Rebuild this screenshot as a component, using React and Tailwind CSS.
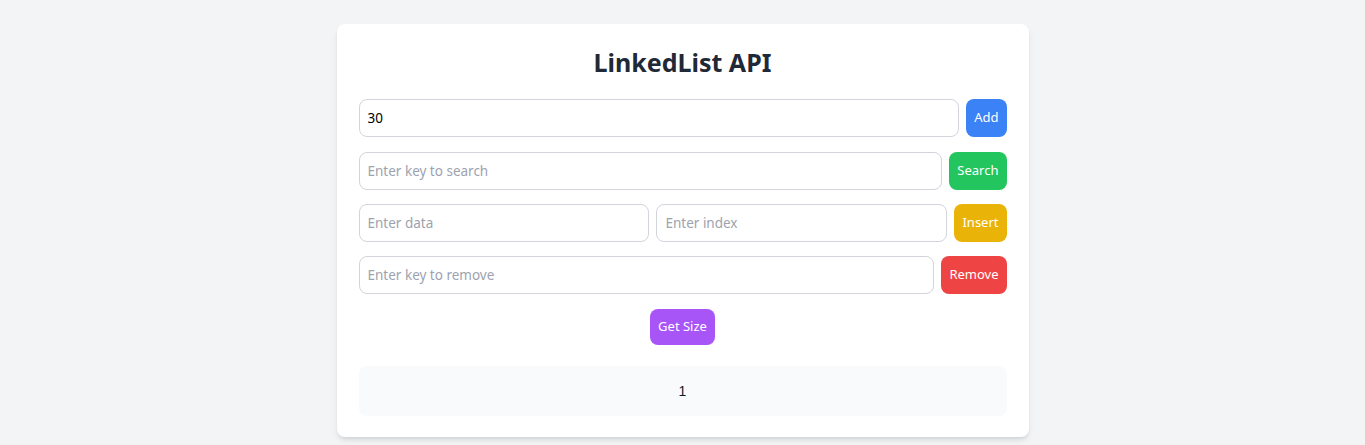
import React, { useState } from 'react';

const inputCls =
  'flex-1 min-w-0 h-[38px] px-2 border border-[#d1d5db] rounded-lg text-[13.5px] text-black placeholder-[#9ca3af] focus:outline-none';
const btnCls = 'h-[38px] px-2 rounded-lg text-[13px] text-white';

function App() {
  const [value, setValue] = useState('30');
  const [searchKey, setSearchKey] = useState('');
  const [data, setData] = useState('');
  const [index, setIndex] = useState('');
  const [removeKey, setRemoveKey] = useState('');
  const [result] = useState('1');

  return (
    <div className="min-h-screen bg-[#f3f4f6] pt-6 font-['Noto_Sans',sans-serif]">
      <div className="mx-auto w-[692px] bg-white rounded-lg shadow-md px-[22px] pt-[22px] pb-[21px]">
        <h1 className="text-center text-[25px] leading-8 font-bold text-[#1f2937] mb-[21px]">
          LinkedList API
        </h1>

        <div className="flex gap-[7px] mb-[15px]">
          <input className={inputCls} value={value} onChange={(e) => setValue(e.target.value)} />
          <button className={`${btnCls} bg-[#3b82f6]`}>Add</button>
        </div>

        <div className="flex gap-[7px] mb-[14px]">
          <input
            className={inputCls}
            placeholder="Enter key to search"
            value={searchKey}
            onChange={(e) => setSearchKey(e.target.value)}
          />
          <button className={`${btnCls} bg-[#22c55e]`}>Search</button>
        </div>

        <div className="flex gap-[7px] mb-[14px]">
          <input
            className={inputCls}
            placeholder="Enter data"
            value={data}
            onChange={(e) => setData(e.target.value)}
          />
          <input
            className={inputCls}
            placeholder="Enter index"
            value={index}
            onChange={(e) => setIndex(e.target.value)}
          />
          <button className={`${btnCls} bg-[#eab308]`}>Insert</button>
        </div>

        <div className="flex gap-[7px] mb-[15px]">
          <input
            className={inputCls}
            placeholder="Enter key to remove"
            value={removeKey}
            onChange={(e) => setRemoveKey(e.target.value)}
          />
          <button className={`${btnCls} bg-[#ef4444]`}>Remove</button>
        </div>

        <div className="flex justify-center mb-[21px]">
          <button className="h-9 px-2 rounded-lg text-[13px] text-white bg-[#a855f7]">Get Size</button>
        </div>

        <div className="h-[50px] flex items-center justify-center bg-[#f9fafb] rounded-lg text-sm text-[#111827] font-['Liberation_Sans',sans-serif]">
          {result}
        </div>
      </div>
    </div>
  );
}

export default App;
